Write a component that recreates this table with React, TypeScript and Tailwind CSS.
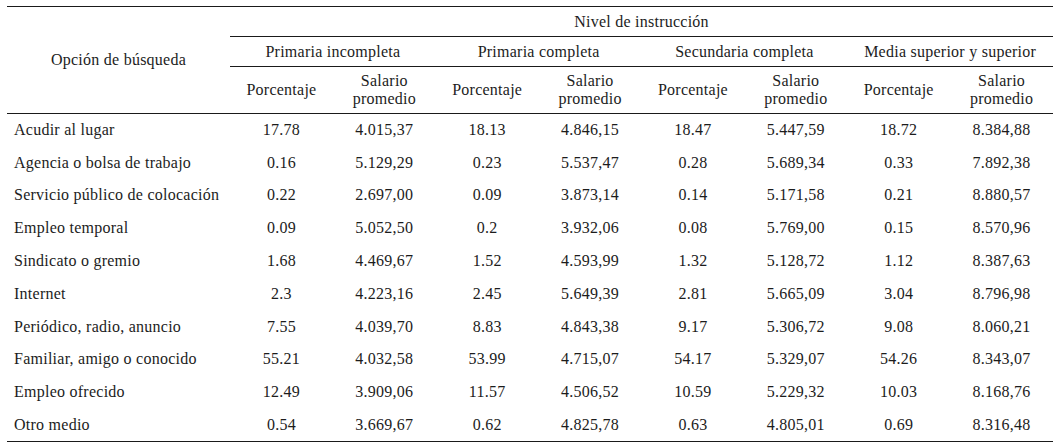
import React from "react";

const groups = [
  "Primaria incompleta",
  "Primaria completa",
  "Secundaria completa",
  "Media superior y superior",
];

const rows: [string, ...string[]][] = [
  ["Acudir al lugar", "17.78", "4.015,37", "18.13", "4.846,15", "18.47", "5.447,59", "18.72", "8.384,88"],
  ["Agencia o bolsa de trabajo", "0.16", "5.129,29", "0.23", "5.537,47", "0.28", "5.689,34", "0.33", "7.892,38"],
  ["Servicio público de colocación", "0.22", "2.697,00", "0.09", "3.873,14", "0.14", "5.171,58", "0.21", "8.880,57"],
  ["Empleo temporal", "0.09", "5.052,50", "0.2", "3.932,06", "0.08", "5.769,00", "0.15", "8.570,96"],
  ["Sindicato o gremio", "1.68", "4.469,67", "1.52", "4.593,99", "1.32", "5.128,72", "1.12", "8.387,63"],
  ["Internet", "2.3", "4.223,16", "2.45", "5.649,39", "2.81", "5.665,09", "3.04", "8.796,98"],
  ["Periódico, radio, anuncio", "7.55", "4.039,70", "8.83", "4.843,38", "9.17", "5.306,72", "9.08", "8.060,21"],
  ["Familiar, amigo o conocido", "55.21", "4.032,58", "53.99", "4.715,07", "54.17", "5.329,07", "54.26", "8.343,07"],
  ["Empleo ofrecido", "12.49", "3.909,06", "11.57", "4.506,52", "10.59", "5.229,32", "10.03", "8.168,76"],
  ["Otro medio", "0.54", "3.669,67", "0.62", "4.825,78", "0.63", "4.805,01", "0.69", "8.316,48"],
];

export default function App() {
  return (
    <div className="w-[1060px] h-[448px] bg-white pt-[6px] pl-[7px] text-[#1c1c1c] [font-family:'Liberation_Serif','Times_New_Roman',serif] text-[16px] tracking-[0.25px]">
      <table className="table-fixed border-collapse w-[1046px]">
        <colgroup>
          <col className="w-[223px]" />
          {Array.from({ length: 8 }).map((_, i) => (
            <col key={i} className="w-[102.875px]" />
          ))}
        </colgroup>
        <thead>
          <tr className="h-[30px]">
            <th
              rowSpan={3}
              className="border-t border-b border-[#1a1a1a] font-normal text-center align-middle"
            >
              Opción de búsqueda
            </th>
            <th colSpan={8} className="border-t border-[#1a1a1a] font-normal text-center align-middle">
              Nivel de instrucción
            </th>
          </tr>
          <tr className="h-[30px]">
            {groups.map((g) => (
              <th
                key={g}
                colSpan={2}
                className="border-t border-b border-[#1a1a1a] font-normal text-center align-middle"
              >
                {g}
              </th>
            ))}
          </tr>
          <tr className="h-[47px]">
            {groups.map((g) => (
              <React.Fragment key={g}>
                <th className="border-b border-[#1a1a1a] font-normal text-center align-middle">
                  Porcentaje
                </th>
                <th className="border-b border-[#1a1a1a] font-normal text-center align-middle leading-[18px]">
                  Salario
                  <br />
                  promedio
                </th>
              </React.Fragment>
            ))}
          </tr>
        </thead>
        <tbody>
          {rows.map((r, ri) => (
            <tr
              key={r[0]}
              className={
                ri === rows.length - 1
                  ? "h-[32.8px] border-b border-[#1a1a1a]"
                  : "h-[32.8px]"
              }
            >
              <td className="text-left pl-[7px] align-middle whitespace-nowrap">{r[0]}</td>
              {r.slice(1).map((v, i) => (
                <td key={i} className="text-center align-middle">
                  {v}
                </td>
              ))}
            </tr>
          ))}
        </tbody>
      </table>
    </div>
  );
}
